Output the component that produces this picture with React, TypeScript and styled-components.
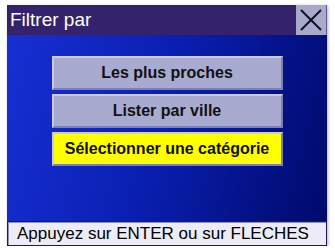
import React from "react";
import styled, { createGlobalStyle } from "styled-components";

const Global = createGlobalStyle`
  html, body { margin: 0; padding: 0; background: #ffffff; }
  body { font-family: "Liberation Sans", Arial, sans-serif; }
`;

const Screen = styled.div`
  margin: 5px 0 0 7px;
  width: 320px;
  height: 241px;
  display: flex;
  flex-direction: column;
  box-shadow: 1px 1px 3px rgba(0, 0, 0, 0.3);
  background: linear-gradient(105deg, #1830d4 0%, #0a20b4 45%, #000868 100%);
`;

const TitleBar = styled.div`
  height: 30px;
  display: flex;
  align-items: stretch;
  background: #35226c;
`;

const Title = styled.div`
  flex: 1;
  color: #ffffff;
  font-size: 19px;
  line-height: 30px;
  padding-left: 3px;
`;

const CloseButton = styled.div`
  width: 30px;
  background: #a9aacb;
  border-right: 1px solid #5a5a8c;
  display: flex;
  align-items: center;
  justify-content: center;
`;

const Content = styled.div`
  flex: 1;
  display: flex;
  flex-direction: column;
  align-items: center;
  gap: 4px;
  padding-top: 21px;
`;

const MenuButton = styled.div<{ $active?: boolean }>`
  width: 231px;
  height: 34px;
  box-sizing: border-box;
  display: flex;
  align-items: center;
  justify-content: center;
  font-weight: bold;
  font-size: 16px;
  color: #111111;
  background: ${(p) => (p.$active ? "#ffff00" : "#a8abcf")};
  border: 2px solid;
  border-color: #c8cae4 #7c80b0 #7c80b0 #c8cae4;
`;

const StatusBar = styled.div`
  height: 25px;
  box-sizing: border-box;
  background: #ecebf6;
  border: 1px solid #1c1a5c;
  box-shadow: inset 1px 1px 0 #8f8fb8;
  display: flex;
  align-items: center;
  padding-left: 9px;
  font-size: 17px;
  color: #000000;
`;

export default function App() {
  return (
    <>
      <Global />
      <Screen>
        <TitleBar>
          <Title>Filtrer par</Title>
          <CloseButton>
            <svg width="24" height="24" viewBox="0 0 24 24">
              <path d="M2 2 L22 22 M22 2 L2 22" stroke="#101020" strokeWidth="2" fill="none" />
            </svg>
          </CloseButton>
        </TitleBar>
        <Content>
          <MenuButton>Les plus proches</MenuButton>
          <MenuButton>Lister par ville</MenuButton>
          <MenuButton $active>Sélectionner une catégorie</MenuButton>
        </Content>
        <StatusBar>Appuyez sur ENTER ou sur FLECHES</StatusBar>
      </Screen>
    </>
  );
}
